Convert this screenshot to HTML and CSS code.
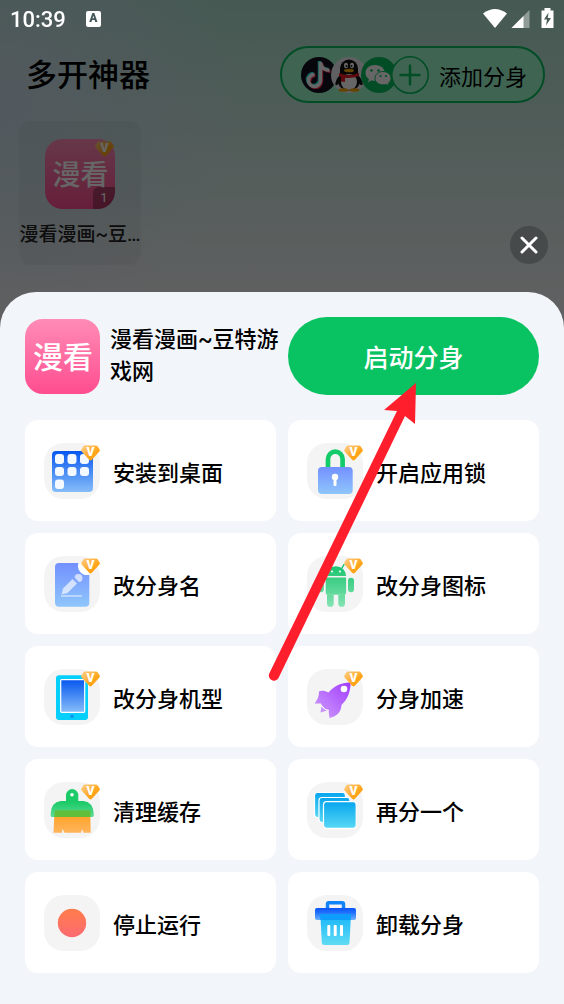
FILE: index.html
```html
<!DOCTYPE html>
<html lang="zh-CN">
<head>
  <meta charset="UTF-8" />
  <meta name="viewport" content="width=device-width, initial-scale=1.0"/>
  <title>多开神器</title>
  <link rel="stylesheet" href="styles.css">
</head>
<body>

  <!-- shared gradients -->
  <svg class="defs" aria-hidden="true">
    <defs>
      <linearGradient id="gPink" x1="0" y1="0" x2="0" y2="1"><stop offset="0" stop-color="#ff8cb5"/><stop offset="1" stop-color="#ff4d90"/></linearGradient>
      <linearGradient id="gGold" x1="0" y1="0" x2="1" y2="1"><stop offset="0" stop-color="#ffd08a"/><stop offset=".6" stop-color="#ffa51c"/><stop offset="1" stop-color="#ff9f00"/></linearGradient>
      <linearGradient id="gBlue" x1="0" y1="0" x2="0" y2="1"><stop offset="0" stop-color="#0757f0"/><stop offset="1" stop-color="#86bdf8"/></linearGradient>
      <linearGradient id="gDoc" x1="0" y1="0" x2="0" y2="1"><stop offset="0" stop-color="#7390ff"/><stop offset="1" stop-color="#8fc6fb"/></linearGradient>
      <linearGradient id="gGreen" x1="0" y1="0" x2="0" y2="1"><stop offset="0" stop-color="#17c964"/><stop offset="1" stop-color="#5cdc94"/></linearGradient>
      <linearGradient id="gDroid" gradientUnits="userSpaceOnUse" x1="0" y1="8" x2="0" y2="51"><stop offset="0" stop-color="#14c36c"/><stop offset="1" stop-color="#86e3b3"/></linearGradient>
      <linearGradient id="gOrange" x1="0" y1="0" x2="0" y2="1"><stop offset="0" stop-color="#ff9f1f"/><stop offset="1" stop-color="#ffb55c"/></linearGradient>
      <linearGradient id="gPurple" x1="1" y1="0" x2="0" y2="1"><stop offset="0" stop-color="#a13cff"/><stop offset="1" stop-color="#d0a0fb"/></linearGradient>
      <linearGradient id="gCyan" x1="0" y1="0" x2="0" y2="1"><stop offset="0" stop-color="#07a6ee"/><stop offset="1" stop-color="#58d8f5"/></linearGradient>
      <linearGradient id="gRed" x1="0" y1="0" x2="0" y2="1"><stop offset="0" stop-color="#ff7d4b"/><stop offset="1" stop-color="#fd6a72"/></linearGradient>
      <linearGradient id="gLid" x1="0" y1="0" x2="0" y2="1"><stop offset="0" stop-color="#0a53fb"/><stop offset=".4" stop-color="#2272fb"/><stop offset="1" stop-color="#6bb2ff"/></linearGradient>
      <linearGradient id="gBin" x1="0" y1="0" x2="0" y2="1"><stop offset="0" stop-color="#16b4fb"/><stop offset="1" stop-color="#5fdcf3"/></linearGradient>
    </defs>
  </svg>
  <svg class="symbols" aria-hidden="true">
    <symbol id="badge" viewBox="0 0 19 16">
      <path d="M4 .5h11q1 0 1.600.8l2 3.200q.6 1-.2 1.900l-7.500 8.400q-1.400 1.600-2.800 0L.6 6.400q-.8-.9-.2-1.900l2-3.200Q3 .5 4 .5z" fill="url(#gGold)"/>
      <text x="9.500" y="11" text-anchor="middle" class="badge-text">V</text>
    </symbol>
  </svg>

  <div class="status-bar">
    <span class="time">10:39</span>
    <span class="input-mark">A</span>
    <svg class="status-icons" width="72" height="22" viewBox="0 0 72 22">
      <path d="M1 5.500Q13 -3.500 25 5.500L13 20z" fill="#fff"/>
      <path d="M29.500 20 47.500 2V20z" fill="#fff" opacity=".4"/>
      <path d="M29.500 20 41.500 8V20z" fill="#fff"/>
      <path d="M59.500 2.500h3V0h6v2.500h3V20h-12z" fill="#fff"/>
      <path d="M66.500 4.500 62 11.500h3l-1 6 5-7.500h-3.200z" fill="#4a5b53"/>
    </svg>
  </div>

  <div class="home">
    <div class="home-header">
      <h1>多开神器</h1>
      <button class="add-btn">
        <span class="add-icons">
          <svg width="36" height="36" viewBox="0 0 36 36">
            <circle cx="18" cy="18" r="18" fill="#10111f"/>
            <g fill="none" stroke-width="3.500">
              <path d="M19.500 5v18.500a6 6 0 1 1-6-6M19.500 6q1.500 7 9 7.500" stroke="#25f4ee" transform="translate(-1 -1)"/>
              <path d="M19.500 5v18.500a6 6 0 1 1-6-6M19.500 6q1.500 7 9 7.500" stroke="#fe2c55" transform="translate(1 1)"/>
              <path d="M19.500 5v18.500a6 6 0 1 1-6-6M19.500 6q1.500 7 9 7.500" stroke="#fff"/>
            </g>
          </svg>
          <svg width="36" height="36" viewBox="0 0 36 36">
            <circle cx="18" cy="18" r="18" fill="#f1eef6"/>
            <path d="M9 18q-5 5-4.500 10 1.500 1 3.500-2M27 18q5 5 4.500 10-1.500 1-3.500-2" fill="#111"/>
            <ellipse cx="18" cy="24" rx="11" ry="9.500" fill="#111"/>
            <ellipse cx="18" cy="25" rx="8" ry="8" fill="#fff"/>
            <path d="M9 17V11.500a9 9 0 0 1 18 0V17z" fill="#111"/>
            <ellipse cx="15" cy="8.500" rx="2" ry="2.800" fill="#fff"/><ellipse cx="21" cy="8.500" rx="2" ry="2.800" fill="#fff"/>
            <circle cx="15.500" cy="9" r="1" fill="#111"/><circle cx="20.500" cy="9" r="1" fill="#111"/>
            <ellipse cx="18" cy="13.500" rx="5" ry="1.800" fill="#faab07"/>
            <path d="M8 16q10 4 20 0v3q-6 2.500-14 2V25l-4-.5V20L8 19z" fill="#eb1923"/>
            <ellipse cx="12.500" cy="33" rx="5" ry="1.800" fill="#faab07"/><ellipse cx="23.500" cy="33" rx="5" ry="1.800" fill="#faab07"/>
          </svg>
          <svg width="36" height="36" viewBox="0 0 36 36">
            <circle cx="18" cy="18" r="18" fill="#07c160"/>
            <path d="M14 8C8.500 8 4.500 11.500 4.500 16c0 2.500 1.300 4.700 3.500 6l-1 3.200 3.700-2q1.600.5 3.500.5c5.500 0 9.600-3.300 9.600-7.700S19.500 8 14 8z" fill="#fff"/>
            <path d="M22 14.500c-4.600 0-8 3-8 6.700s3.400 6.700 8 6.700q1.500 0 3-.5l3 1.700-.8-2.700c1.800-1.200 2.800-3 2.800-5.200 0-3.700-3.400-6.700-8-6.700z" fill="#fff" stroke="#07c160"/>
            <g fill="#07c160"><circle cx="10.500" cy="13.500" r="1.300"/><circle cx="17.500" cy="13.500" r="1.300"/><circle cx="19.500" cy="19" r="1.100"/><circle cx="25" cy="19" r="1.100"/></g>
          </svg>
          <svg width="38" height="38" viewBox="0 0 38 38">
            <circle cx="19" cy="19" r="18.200" fill="#9ffbce" stroke="#07c160" stroke-width="1.600"/>
            <path d="M19 9.500v19M9.500 19h19" stroke="#07c160" stroke-width="2.500" stroke-linecap="round"/>
          </svg>
        </span>
        添加分身
      </button>
    </div>

    <div class="app-card">
      <div class="app-icon">
        <svg width="70" height="70" viewBox="0 0 75 75">
          <rect width="75" height="75" rx="18" fill="url(#gPink)"/>
          <text x="38" y="49" text-anchor="middle" class="logo-text">漫看</text>
        </svg>
        <svg class="app-badge" width="19" height="16"><use href="#badge"/></svg>
        <span class="app-index">1</span>
      </div>
      <p>漫看漫画~豆…</p>
    </div>
  </div>

  <div class="mask"></div>

  <div class="sheet">
    <button class="close-btn" aria-label="关闭">
      <svg width="18" height="18" viewBox="0 0 18 18"><path d="M2 2l14 14M16 2 2 16" stroke="#fff" stroke-width="3" stroke-linecap="round"/></svg>
    </button>

    <div class="sheet-header">
      <div class="app-info">
        <svg width="75" height="75" viewBox="0 0 75 75">
          <rect width="75" height="75" rx="18" fill="url(#gPink)"/>
          <text x="38" y="49" text-anchor="middle" class="logo-text">漫看</text>
        </svg>
        <h2>漫看漫画~豆特游戏网</h2>
      </div>
      <button class="start-btn">启动分身</button>
    </div>

    <div class="actions">
      <button class="action">
        <svg class="icon" viewBox="0 0 56 56">
          <rect x="8" y="8" width="41" height="41" rx="4" fill="url(#gBlue)"/>
          <g fill="#f4f8ff">
            <rect x="11" y="11" width="9" height="10" rx="3"/><rect x="23.500" y="11" width="9" height="10" rx="3"/><rect x="36" y="11" width="9" height="10" rx="3"/>
            <rect x="11" y="24" width="9" height="9" rx="3"/><rect x="23.500" y="24" width="9" height="9" rx="3"/><rect x="36" y="24" width="9" height="9" rx="3"/>
            <rect x="11" y="36.500" width="9" height="9.500" rx="3"/>
          </g>
          <use href="#badge" x="37" y="2" width="19" height="16"/>
        </svg>
        安装到桌面
      </button>
      <button class="action">
        <svg class="icon" viewBox="0 0 56 56">
          <path d="M21 26V16a7.300 7.300 0 0 1 14.600 0v10" fill="none" stroke="#13cb68" stroke-width="4.700"/>
          <rect x="11" y="24" width="34.700" height="27" rx="4" fill="url(#gDoc)"/>
          <circle cx="28" cy="34" r="3.200" fill="#fff"/><rect x="26.500" y="34" width="3" height="9" rx="1" fill="#fff"/>
          <use href="#badge" x="37" y="2" width="19" height="16"/>
        </svg>
        开启应用锁
      </button>
      <button class="action">
        <svg class="icon" viewBox="0 0 56 56">
          <rect x="11" y="7" width="34.300" height="43.700" rx="4" fill="url(#gDoc)"/>
          <path d="M34.500 7h11v12h-3.500A9 9 0 0 1 34.500 7z" fill="#fff"/>
          <g fill="#fff" opacity=".65">
            <path d="M17.500 38.500 19 32.500 28.500 23 33 27.500 23.500 37z"/>
            <path d="M30.500 21.500a4 4 0 1 1 4.500 4.500z"/>
            <rect x="17" y="39.300" width="21" height="1.300"/>
          </g>
          <use href="#badge" x="37" y="2" width="19" height="16"/>
        </svg>
        改分身名
      </button>
      <button class="action">
        <svg class="icon" viewBox="0 0 56 56">
          <g fill="url(#gDroid)">
            <path d="M18.700 20a10.200 9.800 0 0 1 20.400 0z"/>
            <path d="M18.700 21.500h20.400V37q0 1.700-1.700 1.700h-17q-1.700 0-1.700-1.700z"/>
            <rect x="41" y="21.700" width="6" height="14.600" rx="3"/><rect x="10.800" y="21.700" width="6" height="14.600" rx="3"/>
            <path d="M20 38.500h6.700v9a3.300 3.300 0 0 1-6.700 0zM31.300 38.500H38v9a3.300 3.300 0 0 1-6.700 0z"/>
          </g>
          <path d="M23 12l-2-3.500M35 12l2-3.500" stroke="#14c36c" stroke-width="1.500" stroke-linecap="round"/>
          <circle cx="25" cy="15.500" r="1" fill="#fff"/><circle cx="33" cy="15.500" r="1" fill="#fff"/>
          <use href="#badge" x="37" y="2" width="19" height="16"/>
        </svg>
        改分身图标
      </button>
      <button class="action">
        <svg class="icon" viewBox="0 0 56 56">
          <rect x="12" y="6.300" width="32" height="44.700" rx="3" fill="#06cffb"/>
          <rect x="16.700" y="10.700" width="24" height="32.600" rx="1" fill="url(#gBlue)" stroke="#fff" stroke-width="1.200"/>
          <circle cx="28" cy="47.300" r="1.800" fill="#168ff0"/>
          <use href="#badge" x="37" y="2" width="19" height="16"/>
        </svg>
        改分身机型
      </button>
      <button class="action">
        <svg class="icon" viewBox="0 0 56 56">
          <path d="M43.700 13.500C36 13 27 16.500 21.500 23.500 17.500 21.500 14 21.500 12 22.500c0 5-1.500 8.500-4.500 12h6.500l.5 1.500Q18 41 21.500 41.500l1 7.500c6.500-1.500 11.500-5 12-13 6-5.500 9-13 9.200-22.500z" fill="url(#gPurple)"/>
          <path d="M14.500 37.500l5.500 4-6.500 2z" fill="#c892fb"/>
          <path d="M14 36q3 5.500 8 5.500" fill="none" stroke="#fff"/>
          <circle cx="37" cy="20" r="3.300" fill="#fff"/>
          <use href="#badge" x="37" y="2" width="19" height="16"/>
        </svg>
        分身加速
      </button>
      <button class="action">
        <svg class="icon" viewBox="0 0 56 56">
          <path d="M22 20v-7.500a6.200 6.200 0 0 1 12.300 0V20z" fill="#1acb68"/>
          <circle cx="28" cy="12.700" r="1.800" fill="#fff"/>
          <path d="M10.500 30h35.700l.5 20.700h-7l-1.700-3.500-1 3.500H20.500l-2-4-.5 4H9.500z" fill="url(#gOrange)"/>
          <path d="M16.700 19h23q9.500 1 10 13v1.500q0 1.500-1.500 1.500H8.200q-1.500 0-1.500-1.500V32q.5-12 10-13z" fill="url(#gGreen)"/>
          <path d="M11.500 28.300h34q1 0 1 1.500V35h-36v-5.200q0-1.500 1-1.500z" fill="#62bf3c"/>
          <use href="#badge" x="37" y="2" width="19" height="16"/>
        </svg>
        清理缓存
      </button>
      <button class="action">
        <svg class="icon" viewBox="0 0 56 56">
          <g stroke="#fff" stroke-width="1.200" fill="url(#gCyan)">
            <rect x="7.500" y="10.500" width="31" height="25" rx="3"/>
            <rect x="12" y="15.500" width="31" height="25" rx="3"/>
            <rect x="16.500" y="19.700" width="32.700" height="26.600" rx="3"/>
          </g>
          <use href="#badge" x="37" y="2" width="19" height="16"/>
        </svg>
        再分一个
      </button>
      <button class="action">
        <svg class="icon" viewBox="0 0 56 56"><circle cx="28" cy="28" r="14.200" fill="url(#gRed)"/></svg>
        停止运行
      </button>
      <button class="action">
        <svg class="icon" viewBox="0 0 56 56">
          <path d="M20.500 15V9q0-1.300 1.300-1.300h13.400q1.300 0 1.300 1.300v6" fill="none" stroke="#1184fa" stroke-width="3.500"/>
          <path d="M13.300 19H44l-1.500 29q-.2 2-2.200 2H17q-2 0-2.200-2z" fill="url(#gBin)"/>
          <path d="M10 13h37q2 0 2 2v8q0 2-2 2H10q-2 0-2-2v-8q0-2 2-2z" fill="url(#gLid)"/>
          <path d="M13 19h31v6H13.300z" fill="#0f9dfb"/>
          <g fill="#fff"><rect x="20.300" y="30" width="3" height="11" rx="1"/><rect x="26.700" y="30" width="3" height="11" rx="1"/><rect x="33" y="30" width="3" height="11" rx="1"/></g>
        </svg>
        卸载分身
      </button>
    </div>

    <!-- pointer to the start button -->
    <svg class="arrow" width="150" height="300" viewBox="0 0 150 300" aria-hidden="true">
      <path d="M148 1 116 28 129 29 1.500 291a5 5 0 0 0 9 5L137 34 147 42z" fill="#ff1f2c"/>
    </svg>
  </div>

</body>
</html>
```
FILE: styles.css
```css
* {
  box-sizing: border-box;
}
body {
  margin: 0;
  min-height: 100vh;
  display: flex;
  flex-direction: column;
  font-family: Roboto, "Noto Sans CJK SC", sans-serif;
  color: #000;
  background-color: #f1f1f4;
  background-image:
    radial-gradient(circle at 0 100px, rgba(208,220,240,0.8), rgba(208,220,240,0) 240px),
    linear-gradient(#aee0cf 0, #f1f1f4 310px);
}
h1, h2, p {
  margin: 0;
}
button {
  font-family: inherit;
  color: inherit;
  border: none;
  padding: 0;
  cursor: pointer;
}
svg {
  display: block;
}
.defs {
  position: absolute;
  width: 0;
  height: 0;
}
.symbols {
  display: none;
}
.badge-text {
  font-size: 12px;
  font-weight: 900;
  fill: #fff;
}
.logo-text {
  font-size: 30px;
  font-weight: 500;
  fill: #fff;
}

/* status bar */
.status-bar {
  position: relative;
  z-index: 2;
  display: flex;
  align-items: center;
  height: 38px;
  padding: 0 10px;
  color: #fff;
}
.time {
  font-size: 22px;
  font-weight: 500;
}
.input-mark {
  width: 15px;
  height: 16px;
  margin-left: 20px;
  border-radius: 2px;
  background-color: #fff;
  color: #45595a;
  font-size: 12px;
  font-weight: 900;
  line-height: 15px;
  text-align: center;
}
.status-icons {
  margin-left: auto;
}

/* home screen behind the sheet */
.home {
  padding: 8px 19px 27px;
}
.home-header {
  display: flex;
  align-items: center;
  justify-content: space-between;
  padding-left: 7px;
  margin-bottom: 18px;
}
h1 {
  padding-top: 3px;
  font-size: 31px;
  font-weight: 500;
  line-height: 40px;
}
.add-btn {
  display: flex;
  align-items: center;
  gap: 10px;
  height: 57px;
  padding: 0 16px 0 19px;
  border: 2px solid #07c160;
  border-radius: 29px;
  background-color: #9ffbce;
  font-size: 22px;
}
.add-icons {
  display: flex;
  align-items: center;
}
.add-icons svg + svg {
  margin-left: -6px;
}
.app-card {
  display: flex;
  flex-direction: column;
  align-items: center;
  gap: 12px;
  width: 122px;
  height: 144px;
  padding-top: 18px;
  border-radius: 12px;
  background-color: rgba(0,0,0,0.04);
}
.app-card p {
  font-size: 19px;
  font-weight: 500;
  line-height: 28px;
  white-space: nowrap;
  color: #222;
}
.app-icon {
  position: relative;
  overflow: hidden;
  border-radius: 17px 0 17px 17px;
}
.app-badge {
  position: absolute;
  top: 2px;
  right: 1px;
}
.app-index {
  position: absolute;
  right: 0;
  bottom: 0;
  width: 22px;
  height: 22px;
  border-radius: 6px 0 0 0;
  background-color: rgba(0,0,0,0.3);
  color: #fff;
  font-size: 13px;
  line-height: 22px;
  text-align: center;
}

.mask {
  position: fixed;
  inset: 0;
  background-color: rgba(0,0,0,0.6);
}

/* bottom sheet */
.sheet {
  position: relative;
  z-index: 2;
  flex: 1;
  padding: 25px 25px 31px;
  border-radius: 36px 36px 0 0;
  background-color: #f2f5fa;
}
.close-btn {
  position: absolute;
  top: -66px;
  right: 16px;
  display: flex;
  align-items: center;
  justify-content: center;
  width: 38px;
  height: 38px;
  border-radius: 50%;
  background-color: #464a4a;
}
.sheet-header,
.actions {
  display: grid;
  grid-template-columns: 1fr 1fr;
  gap: 12px;
}
.sheet-header {
  align-items: center;
  margin-bottom: 25px;
}
.app-info {
  display: flex;
  align-items: center;
  gap: 10px;
  margin-right: -12px;
}
.app-info svg {
  flex: none;
}
h2 {
  font-size: 22px;
  font-weight: 500;
  line-height: 32px;
}
.start-btn {
  height: 78px;
  border-radius: 39px;
  background-color: #09c261;
  color: #fff;
  font-size: 25px;
  font-weight: 500;
}
.action {
  display: flex;
  align-items: center;
  gap: 13px;
  height: 101px;
  padding-left: 19px;
  border-radius: 13px;
  background-color: #fff;
  font-size: 22px;
  font-weight: 500;
}
.icon {
  width: 56px;
  height: 56px;
  border-radius: 20px;
  background-color: #f4f4f5;
  overflow: visible;
}
.arrow {
  position: absolute;
  top: 90px;
  left: calc(50% - 14px);
  pointer-events: none;
}
```
